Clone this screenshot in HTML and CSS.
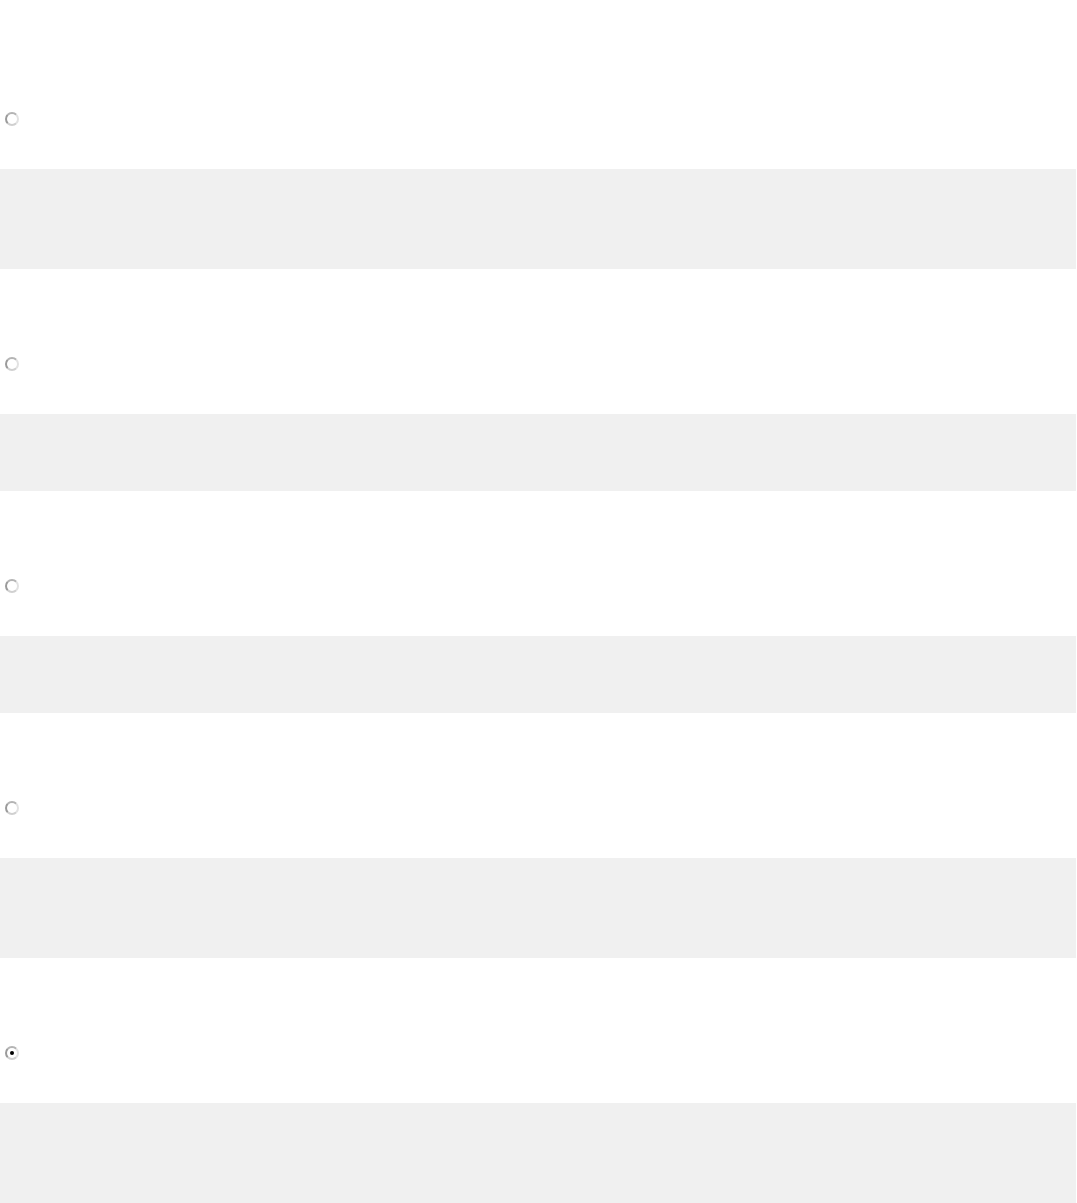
FILE: index.html
```html
<!DOCTYPE html>
<html lang="en">
<head>
<meta charset="utf-8">
<title>Options</title>
<link rel="stylesheet" href="styles.css">
</head>
<body>
<main class="list">
  <section class="option">
    <div class="choice"><input class="radio" type="radio" name="opt" aria-label="Option 1"></div>
    <div class="band band-tall"></div>
  </section>
  <section class="option">
    <div class="choice"><input class="radio" type="radio" name="opt" aria-label="Option 2"></div>
    <div class="band band-short"></div>
  </section>
  <section class="option">
    <div class="choice"><input class="radio" type="radio" name="opt" aria-label="Option 3"></div>
    <div class="band band-short"></div>
  </section>
  <section class="option">
    <div class="choice"><input class="radio" type="radio" name="opt" aria-label="Option 4"></div>
    <div class="band band-tall"></div>
  </section>
  <section class="option">
    <div class="choice"><input class="radio" type="radio" name="opt" aria-label="Option 5" checked></div>
    <div class="band band-tall"></div>
  </section>
</main>
</body>
</html>
```
FILE: styles.css
```css
html, body {
  margin: 0;
  padding: 0;
  background: #ffffff;
  font-family: "Liberation Sans", Arial, sans-serif;
}

.list {
  display: flex;
  flex-direction: column;
  padding-top: 24px;
  overflow: hidden;
  height: 1203px;
  box-sizing: border-box;
}

.option {
  display: flex;
  flex-direction: column;
  padding-top: 88px;
}

.choice {
  display: flex;
  align-items: center;
  height: 13px;
}

.radio {
  appearance: none;
  -webkit-appearance: none;
  margin: 0 0 0 5px;
  width: 14px;
  height: 14px;
  border-radius: 50%;
  border: 2px solid #9a9a9a;
  border-top-color: #b4b4b4;
  border-right-color: #e2e2e2;
  border-bottom-color: #d0d0d0;
  background: #ffffff;
  box-sizing: border-box;
  position: relative;
}

.radio:checked::after {
  content: "";
  position: absolute;
  left: 3px;
  top: 3px;
  width: 4px;
  height: 4px;
  border-radius: 50%;
  background: #000000;
}

.band {
  margin-top: 44px;
  background: #f0f0f0;
  width: 1076px;
}

.band-tall {
  height: 100px;
}

.band-short {
  height: 77px;
}
```
